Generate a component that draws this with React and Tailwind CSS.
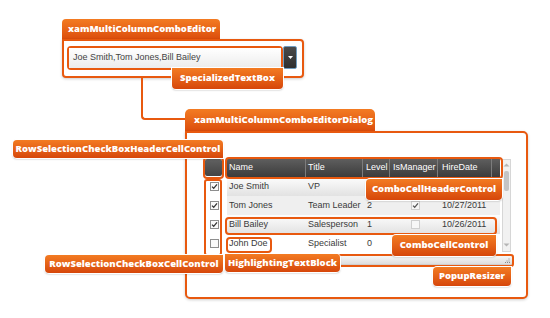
import React from "react";

const orange = "border-[#e8590f]";

function Label({ className, children }) {
  return (
    <div
      className={`absolute flex items-center justify-center whitespace-nowrap bg-linear-to-b from-[#f37b22] to-[#d6460a] font-['Open_Sans','DejaVu_Sans',sans-serif] text-[9.5px] font-extrabold text-white shadow-[0_1px_2px_rgba(0,0,0,0.35)] ring-1 ring-white ${className}`}
    >
      {children}
    </div>
  );
}

function Tab({ className, children }) {
  return (
    <div
      className={`flex items-center whitespace-nowrap bg-linear-to-b from-[#f37b22] to-[#dc4d0c] font-['Open_Sans','DejaVu_Sans',sans-serif] text-[9.5px] font-extrabold text-white ${className}`}
    >
      {children}
    </div>
  );
}

function Check({ checked, faded = false }) {
  return (
    <svg width="9" height="9" viewBox="0 0 9 9">
      <rect
        x="0.5"
        y="0.5"
        width="8"
        height="8"
        fill={faded ? "#f7f7f7" : "#fafafa"}
        stroke={faded ? "#cfcfcf" : "#8e8e8e"}
      />
      {checked && (
        <path
          d="M2 4.6 L3.7 6.3 L7 2.4"
          fill="none"
          stroke={faded ? "#555" : "#333"}
          strokeWidth="1.3"
        />
      )}
    </svg>
  );
}

const cols = [
  { key: "name", label: "Name", w: "w-[79px]", pl: "pl-[2px]" },
  { key: "title", label: "Title", w: "w-[57px]", pl: "pl-[2px]" },
  { key: "level", label: "Level", w: "w-[27px]", pl: "pl-[3px]" },
  { key: "mgr", label: "IsManager", w: "w-[48px]", pl: "pl-[3px]" },
  { key: "date", label: "HireDate", w: "w-[54px]", pl: "pl-[4px]" },
];

const rows = [
  { name: "Joe Smith", title: "VP", level: "", mgr: null, date: "", sel: true, bg: "bg-linear-to-b from-[#fdfdfd] to-[#e2e2e2]" },
  { name: "Tom Jones", title: "Team Leader", level: "2", mgr: true, date: "10/27/2011", sel: true, bg: "bg-[#efefef]" },
  { name: "Bill Bailey", title: "Salesperson", level: "1", mgr: false, date: "10/26/2011", sel: true, bg: "bg-linear-to-b from-[#fdfdfd] to-[#e2e2e2]" },
  { name: "John Doe", title: "Specialist", level: "0", mgr: null, date: "", sel: false, bg: "bg-white" },
];

function Grid() {
  return (
    <div className="ml-[16px] mt-[24px] flex w-[311px] flex-col">
      <div className="flex pt-[2px]">
        {/* row selection column */}
        <div className="ml-[2px] flex w-[17px] flex-col">
          <div className="h-[17px] rounded-[2px] bg-linear-to-b from-[#616161] to-[#444]" />
          <div className="mt-[1px] flex flex-col bg-white">
            {rows.map((r) => (
              <div key={r.name} className="flex h-[19px] items-center justify-center pl-[1px]">
                <Check checked={r.sel} />
              </div>
            ))}
          </div>
        </div>

        {/* data columns */}
        <div className="ml-[5px] flex w-[273px] flex-col whitespace-nowrap text-[9px]">
          <div className="flex h-[18px] bg-linear-to-b from-[#5e5e5e] to-[#3c3c3c] text-white">
            {cols.map((c) => (
              <div
                key={c.key}
                className={`${c.w} ${c.pl} flex items-center overflow-hidden border-r border-[#7c7c7c]`}
              >
                {c.label}
              </div>
            ))}
            <div className="w-[8px]" />
          </div>
          {rows.map((r) => (
            <div key={r.name} className={`flex h-[19px] items-center text-[#3a3a3a] ${r.bg}`}>
              <div className="w-[79px] pl-[2px]">{r.name}</div>
              <div className="w-[57px] pl-[2px]">{r.title}</div>
              <div className="w-[27px] pl-[4px]">{r.level}</div>
              <div className="flex w-[48px] justify-center pl-[2px]">
                {r.mgr !== null && <Check checked={r.mgr} faded />}
              </div>
              <div className="w-[54px] pl-[4px]">{r.date}</div>
            </div>
          ))}
        </div>

        {/* scrollbar */}
        <div className="ml-[2px] flex h-[93px] w-[9px] flex-col items-center border border-[#d6d6d6] bg-[#f1f1f1]">
          <svg width="7" height="6" viewBox="0 0 7 6" className="mt-[2px]">
            <path d="M0.5 4.5 L3.5 1.5 L6.5 4.5 Z" fill="#b5b5b5" />
          </svg>
          <div className="mt-[3px] h-[20px] w-[5px] rounded-[2px] bg-[#c4c4c4]" />
          <div className="flex-1" />
          <svg width="7" height="6" viewBox="0 0 7 6" className="mb-[3px]">
            <path d="M0.5 1.5 L3.5 4.5 L6.5 1.5 Z" fill="#b5b5b5" />
          </svg>
        </div>
      </div>

      {/* popup resizer */}
      <div className="ml-[2px] mt-[2px] flex h-[10px] w-[308px] items-center justify-end rounded-[2px] border border-[#cfcfcf] bg-linear-to-b from-[#f6f6f6] to-[#dedede] pr-[2px]">
        <svg width="5" height="5" viewBox="0 0 5 5">
          <rect x="3.5" y="0.5" width="1" height="1" fill="#888" />
          <rect x="1.5" y="2.5" width="1" height="1" fill="#888" />
          <rect x="3.5" y="2.5" width="1" height="1" fill="#888" />
          <rect x="0" y="4" width="1" height="1" fill="#888" />
          <rect x="2" y="4" width="1" height="1" fill="#888" />
          <rect x="4" y="4" width="1" height="1" fill="#888" />
        </svg>
      </div>
    </div>
  );
}

export default function App() {
  return (
    <div className="relative h-[318px] w-[550px] overflow-hidden bg-white font-['Liberation_Sans',Arial,sans-serif]">
      {/* editor */}
      <div className="absolute left-[62px] top-[19px] flex flex-col">
        <Tab className="h-[20px] w-[158px] rounded-t-[4px] pl-[6px]">xamMultiColumnComboEditor</Tab>
        <div className={`flex h-[39px] w-[242px] rounded-[4px] rounded-tl-none border-2 ${orange} bg-white pl-[3px] pt-[5px] shadow-[0_1px_3px_rgba(0,0,0,0.2)]`}>
          <div className={`h-[24px] w-[216px] rounded-[4px] border-2 ${orange}`}>
            <div className="flex h-full items-center whitespace-nowrap bg-linear-to-b from-white to-[#ececec] pl-[4px] text-[9px] text-[#444]">
              Joe Smith,Tom Jones,Bill Bailey
            </div>
          </div>
          <div className="flex h-[23px] w-[14px] items-center justify-center rounded-[2px] border border-[#6f9cc0] bg-linear-to-b from-[#4a4a4a] to-[#2f2f2f]">
            <svg width="5" height="3" viewBox="0 0 5 3">
              <path d="M0 0 L5 0 L2.5 3 Z" fill="#fff" />
            </svg>
          </div>
        </div>
      </div>
      <Label className="left-[172px] top-[68px] h-[21px] w-[111px] rounded-b-[4px]">SpecializedTextBox</Label>

      {/* connector */}
      <div className={`absolute left-[141px] top-[77px] h-[43px] w-[45px] rounded-bl-[4px] border-b-2 border-l-2 ${orange}`} />

      {/* dialog */}
      <div className="absolute left-[185px] top-[109px] flex flex-col">
        <Tab className="h-[22px] w-[190px] rounded-t-[5px] pl-[9px]">xamMultiColumnComboEditorDialog</Tab>
        <div className={`h-[168px] w-[343px] rounded-[5px] rounded-tl-none border-2 ${orange} bg-white shadow-[0_1px_3px_rgba(0,0,0,0.2)]`}>
          <Grid />
        </div>
      </div>

      {/* highlight outlines */}
      <div className={`absolute left-[203px] top-[157px] h-[22px] w-[21px] rounded-[4px] border-2 ${orange}`} />
      <div className={`absolute left-[204px] top-[179px] h-[77px] w-[18px] rounded-[3px] border-2 ${orange}`} />
      <div className={`absolute left-[225px] top-[157px] h-[22px] w-[278px] rounded-[4px] border-2 ${orange}`} />
      <div className={`absolute left-[225px] top-[217px] h-[18px] w-[272px] rounded-[4px] border-2 ${orange}`} />
      <div className={`absolute left-[226px] top-[237px] h-[16px] w-[46px] rounded-[4px] border-2 ${orange}`} />
      <div className={`absolute left-[204px] top-[254px] h-[13px] w-[310px] rounded-[3px] border-2 ${orange}`} />

      {/* callout labels */}
      <Label className="left-[13px] top-[140px] h-[18px] w-[210px] rounded-[4px] rounded-br-none">
        RowSelectionCheckBoxHeaderCellControl
      </Label>
      <Label className="left-[366px] top-[179px] h-[21px] w-[136px] rounded-[4px] rounded-tr-none">
        ComboCellHeaderControl
      </Label>
      <Label className="left-[392px] top-[235px] h-[21px] w-[104px] rounded-[4px] rounded-tr-none">
        ComboCellControl
      </Label>
      <Label className="left-[225px] top-[254px] h-[18px] w-[115px] rounded-[4px] rounded-tl-none">
        HighlightingTextBlock
      </Label>
      <Label className="left-[45px] top-[255px] h-[18px] w-[178px] rounded-[4px] rounded-tr-none">
        RowSelectionCheckBoxCellControl
      </Label>
      <Label className="left-[433px] top-[267px] h-[19px] w-[78px] rounded-[4px] rounded-tr-none">
        PopupResizer
      </Label>
    </div>
  );
}
